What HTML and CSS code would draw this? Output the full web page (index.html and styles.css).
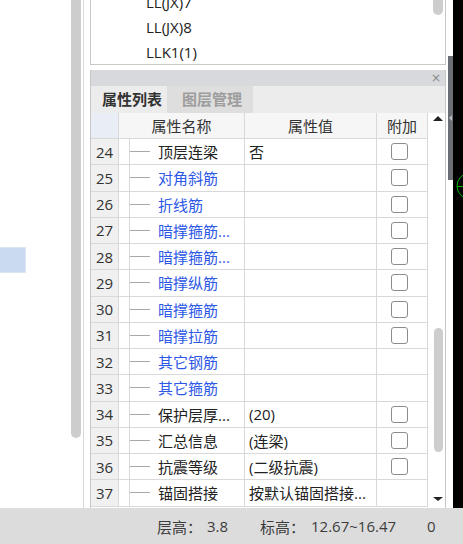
FILE: index.html
```html
<!DOCTYPE html>
<html lang="zh">
<head>
<meta charset="utf-8">
<title>属性列表</title>
<link rel="stylesheet" href="styles.css">
</head>
<body>
<div class="app">
  <div class="main">
    <div class="left">
      <div class="canvas"><div class="sel"></div></div>
      <div class="lscroll"><div class="lthumb"></div></div>
      <div class="lgap"></div>
    </div>
    <div class="center">
      <div class="list">
        <div class="items">
          <div class="item first">LL(JX)7</div>
          <div class="item">LL(JX)8</div>
          <div class="item">LLK1(1)</div>
        </div>
        <div class="listscroll"><div class="listthumb"></div></div>
      </div>
      <div class="props">
        <div class="titlebar"><span class="close">×</span></div>
        <div class="tabs">
          <div class="tab active">属性列表</div>
          <div class="tab inactive">图层管理</div>
        </div>
        <div class="gridwrap">
          <div class="grid">
            <div class="row head">
              <div class="c num"></div>
              <div class="c hname">属性名称</div>
              <div class="c hval">属性值</div>
              <div class="c hext">附加</div>
            </div>
            <div class="row"><div class="c num">24</div><div class="c tree"></div><div class="c name"><i class="branch"></i>顶层连梁</div><div class="c val">否</div><div class="c ext"><span class="cb"></span></div></div>
            <div class="row"><div class="c num">25</div><div class="c tree"></div><div class="c name blue"><i class="branch"></i>对角斜筋</div><div class="c val"></div><div class="c ext"><span class="cb"></span></div></div>
            <div class="row"><div class="c num">26</div><div class="c tree"></div><div class="c name blue"><i class="branch"></i>折线筋</div><div class="c val"></div><div class="c ext"><span class="cb"></span></div></div>
            <div class="row"><div class="c num">27</div><div class="c tree"></div><div class="c name blue"><i class="branch"></i>暗撑箍筋...</div><div class="c val"></div><div class="c ext"><span class="cb"></span></div></div>
            <div class="row"><div class="c num">28</div><div class="c tree"></div><div class="c name blue"><i class="branch"></i>暗撑箍筋...</div><div class="c val"></div><div class="c ext"><span class="cb"></span></div></div>
            <div class="row"><div class="c num">29</div><div class="c tree"></div><div class="c name blue"><i class="branch"></i>暗撑纵筋</div><div class="c val"></div><div class="c ext"><span class="cb"></span></div></div>
            <div class="row"><div class="c num">30</div><div class="c tree"></div><div class="c name blue"><i class="branch"></i>暗撑箍筋</div><div class="c val"></div><div class="c ext"><span class="cb"></span></div></div>
            <div class="row"><div class="c num">31</div><div class="c tree"></div><div class="c name blue"><i class="branch"></i>暗撑拉筋</div><div class="c val"></div><div class="c ext"><span class="cb"></span></div></div>
            <div class="row"><div class="c num">32</div><div class="c tree"></div><div class="c name blue"><i class="branch"></i>其它钢筋</div><div class="c val"></div><div class="c ext"></div></div>
            <div class="row"><div class="c num">33</div><div class="c tree"></div><div class="c name blue"><i class="branch"></i>其它箍筋</div><div class="c val"></div><div class="c ext"></div></div>
            <div class="row"><div class="c num">34</div><div class="c tree"></div><div class="c name"><i class="branch"></i>保护层厚...</div><div class="c val">(20)</div><div class="c ext"><span class="cb"></span></div></div>
            <div class="row"><div class="c num">35</div><div class="c tree"></div><div class="c name"><i class="branch"></i>汇总信息</div><div class="c val">(连梁)</div><div class="c ext"><span class="cb"></span></div></div>
            <div class="row"><div class="c num">36</div><div class="c tree"></div><div class="c name"><i class="branch"></i>抗震等级</div><div class="c val">(二级抗震)</div><div class="c ext"><span class="cb"></span></div></div>
            <div class="row"><div class="c num">37</div><div class="c tree"></div><div class="c name"><i class="branch"></i>锚固搭接</div><div class="c val">按默认锚固搭接...</div><div class="c ext"></div></div>
          </div>
          <div class="vscroll">
            <span class="arrow up"></span>
            <span class="vthumb"></span>
            <span class="arrow down"></span>
          </div>
        </div>
      </div>
    </div>
    <div class="splitter">
      <div class="handle"><span class="harrow"></span></div>
    </div>
    <div class="cad">
      <svg width="10" height="508" viewBox="0 0 10 508">
        <circle cx="17" cy="186" r="13" fill="none" stroke="#00b400" stroke-width="1"/>
        <line x1="4" y1="186.5" x2="10" y2="186.5" stroke="#00b400" stroke-width="1"/>
      </svg>
    </div>
  </div>
  <div class="status">
    <span class="s-lbl1">层高：</span><span class="s-val1">3.8</span>
    <span class="s-lbl2">标高：</span><span class="s-val2">12.67~16.47</span>
    <span class="s-val3">0</span>
  </div>
</div>
</body>
</html>
```

FILE: styles.css
```css
* { box-sizing: border-box; margin: 0; padding: 0; }
html, body { width: 463px; height: 544px; overflow: hidden; }
body {
  font-family: "Open Sans", "Noto Sans CJK SC", sans-serif;
  font-size: 15px;
  color: #333;
  background: #fff;
}
.app { display: flex; flex-direction: column; height: 544px; }
.main { display: flex; height: 508px; }

/* left drawing area */
.left { display: flex; width: 90px; height: 508px; }
.canvas { width: 71px; padding-top: 247px; }
.sel { width: 26px; height: 26px; background: #c9daf1; border: 1px solid #dbe6f5; border-left: none; }
.lscroll { width: 10px; }
.lthumb { width: 10px; height: 438px; background: #cdcdcd; border-radius: 0 0 5px 5px; }
.lgap { width: 7px; margin-left: 2px; border-left: 1px solid #d8d8d8; }

/* center column */
.center { width: 356px; display: flex; flex-direction: column; }
.list {
  height: 65px;
  margin-bottom: 5px;
  border: 1px solid #c9c9c9;
  border-top: none;
  display: flex;
  overflow: hidden;
}
.items { flex: 1; padding-left: 55px; }
.item { height: 25px; line-height: 25px; color: #222; font-size: 15px; white-space: nowrap; }
.item.first { margin-top: -10px; }
.listscroll { width: 14px; padding-left: 2px; }
.listthumb { width: 10px; height: 15px; background: #cdcdcd; border-radius: 0 0 5px 5px; }

.props {
  height: 438px;
  border-left: 1px solid #c6c6c6;
  border-right: 1px solid #c6c6c6;
  display: flex;
  flex-direction: column;
}
.titlebar {
  height: 16px;
  background: #d7d9dd;
  display: flex;
  justify-content: flex-end;
  align-items: center;
  padding-right: 4px;
}
.close { font-size: 12px; line-height: 16px; color: #8a8a8a; font-family: "DejaVu Sans", sans-serif; }
.tabs { height: 27px; background: #ececec; display: flex; }
.tab { height: 27px; line-height: 27px; font-weight: bold; font-size: 15px; white-space: nowrap; }
.tab.active { width: 76px; padding-left: 11px; color: #333; }
.tab.inactive { width: 86px; padding-left: 15px; background: #dedede; color: #9d9d9d; }

.gridwrap { display: flex; height: 394px; }
.grid { width: 337px; }
.row {
  display: grid;
  grid-template-columns: 28px 11px 115px 132px 51px;
  height: 26.25px;
}
.row.head { height: 26px; grid-template-columns: 28px 126px 132px 51px; }
.c {
  border-right: 1px solid #d9d9d9;
  border-bottom: 1px solid #d9d9d9;
  display: flex;
  align-items: center;
  white-space: nowrap;
  overflow: hidden;
}
.num { background: #f0f0f0; justify-content: center; color: #333; }
.head .c { background: #f6f6f6; justify-content: center; color: #333; }
.head .num { background: #e9eef6; }
.tree { background: #fff; }
.name { color: #222; }
.name.blue { color: #2d58e6; }
.branch { display: block; width: 20px; height: 1px; background: #a8a8a8; margin-right: 8px; flex: none; }
.val { padding-left: 4px; color: #222; }
.ext { padding-left: 14px; }
.cb {
  display: block;
  width: 17px;
  height: 17px;
  border: 1.5px solid #8c8c8c;
  border-radius: 3px;
  background: #fff;
}

.vscroll {
  width: 17px;
  display: flex;
  flex-direction: column;
  align-items: flex-start;
  padding-left: 5px;
}
.arrow { display: block; width: 0; height: 0; border-left: 5px solid transparent; border-right: 5px solid transparent; }
.arrow.up { margin-top: 3px; border-bottom: 5px solid #222; }
.arrow.down { margin-top: 45px; border-top: 4px solid #222; }
.vthumb { display: block; width: 9px; height: 124px; margin-top: 207px; margin-left: 1px; background: #cdcdcd; border-radius: 4.5px; }

/* splitter and cad */
.splitter { width: 7px; padding-top: 56px; padding-left: 2px; }
.handle { width: 5px; height: 124px; background: #6b6f75; padding-top: 59px; }
.harrow { display: block; width: 0; height: 0; margin-left: 1px; border-top: 3px solid transparent; border-bottom: 3px solid transparent; border-right: 3px solid #b8bbbf; }
.cad { width: 10px; background: #000; overflow: hidden; }
.cad svg { display: block; }

/* status bar */
.status {
  height: 36px;
  background: #dcdcdc;
  display: flex;
  align-items: center;
  padding-left: 157px;
  color: #3c3c3c;
  font-size: 15px;
  white-space: nowrap;
}
.s-lbl1 { width: 50px; }
.s-val1 { width: 53px; }
.s-lbl2 { width: 51px; }
.s-val2 { width: 116px; }
```
